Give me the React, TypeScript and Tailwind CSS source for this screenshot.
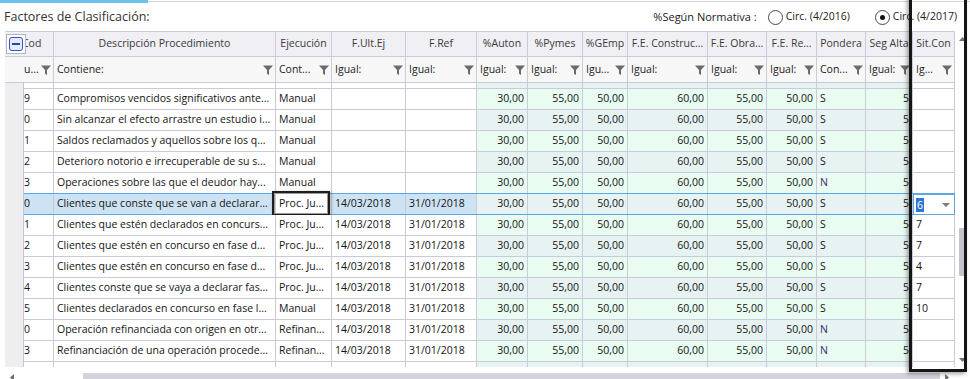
import { ReactNode } from "react";

const GRID = "border-[#cacadb]";

type Row = {
  cod: string;
  desc: string;
  ejec: string;
  fult: string;
  fref: string;
  pond: string;
  sit: string;
  selected?: boolean;
};

const rows: Row[] = [
  { cod: "8", desc: "", ejec: "", fult: "", fref: "", pond: "", sit: "" },
  { cod: "9", desc: "Compromisos vencidos significativos ante...", ejec: "Manual", fult: "", fref: "", pond: "S", sit: "" },
  { cod: "0", desc: "Sin alcanzar el efecto arrastre un estudio i...", ejec: "Manual", fult: "", fref: "", pond: "S", sit: "" },
  { cod: "1", desc: "Saldos reclamados y aquellos sobre los q...", ejec: "Manual", fult: "", fref: "", pond: "S", sit: "" },
  { cod: "2", desc: "Deterioro notorio e irrecuperable de su s...", ejec: "Manual", fult: "", fref: "", pond: "S", sit: "" },
  { cod: "3", desc: "Operaciones sobre las que el deudor hay...", ejec: "Manual", fult: "", fref: "", pond: "N", sit: "" },
  { cod: "0", desc: "Clientes que conste que se van a declarar...", ejec: "Proc. Ju...", fult: "14/03/2018", fref: "31/01/2018", pond: "S", sit: "6", selected: true },
  { cod: "1", desc: "Clientes que estén declarados en concurs...", ejec: "Proc. Ju...", fult: "14/03/2018", fref: "31/01/2018", pond: "S", sit: "7" },
  { cod: "2", desc: "Clientes que estén en concurso en fase d...", ejec: "Proc. Ju...", fult: "14/03/2018", fref: "31/01/2018", pond: "S", sit: "7" },
  { cod: "3", desc: "Clientes que estén en concurso en fase d...", ejec: "Proc. Ju...", fult: "14/03/2018", fref: "31/01/2018", pond: "S", sit: "4" },
  { cod: "4", desc: "Clientes conste que se vaya a declarar fas...", ejec: "Proc. Ju...", fult: "14/03/2018", fref: "31/01/2018", pond: "S", sit: "7" },
  { cod: "5", desc: "Clientes declarados en concurso en  fase l...", ejec: "Manual", fult: "14/03/2018", fref: "31/01/2018", pond: "S", sit: "10" },
  { cod: "0", desc: "Operación refinanciada con origen en otr...", ejec: "Refinan...", fult: "14/03/2018", fref: "31/01/2018", pond: "N", sit: "" },
  { cod: "3", desc: "Refinanciación de una operación procede...", ejec: "Refinan...", fult: "14/03/2018", fref: "31/01/2018", pond: "N", sit: "" },
  { cod: "4", desc: "", ejec: "", fult: "", fref: "", pond: "", sit: "" },
];

const headers = [
  { w: "w-[222px]", title: "Descripción Procedimiento", filter: "Contiene:" },
  { w: "w-[56px]", title: "Ejecución", filter: "Cont..." },
  { w: "w-[74px]", title: "F.Ult.Ej", filter: "Igual:" },
  { w: "w-[71px]", title: "F.Ref", filter: "Igual:" },
  { w: "w-[51px]", title: "%Auton", filter: "Igual:" },
  { w: "w-[55px]", title: "%Pymes", filter: "Igual:" },
  { w: "w-[45px]", title: "%GEmp", filter: "Igu..." },
  { w: "w-[80px]", title: "F.E. Construc...", filter: "Igual:" },
  { w: "w-[59px]", title: "F.E. Obra...", filter: "Igual:" },
  { w: "w-[50px]", title: "F.E. Re...", filter: "Igual:" },
  { w: "w-[49px]", title: "Pondera", filter: "Con..." },
  { w: "w-[47px]", title: "Seg Alta", filter: "Igual:" },
  { w: "w-[42px]", title: "Sit.Con", filter: "Ig..." },
];

const Funnel = () => (
  <svg width="10" height="10" viewBox="0 0 10 10" className="shrink-0">
    <path d="M0 0.5 H10 L6 5 V10 L4 8.8 V5 Z" fill="#6b6b6b" />
  </svg>
);

const Cell = ({ w, bg, right, children, className = "" }: { w: string; bg: string; right?: boolean; children?: ReactNode; className?: string }) => (
  <div
    className={`${w} ${bg} h-full shrink-0 border-r border-b ${GRID} flex items-center overflow-hidden whitespace-nowrap ${right ? "justify-end pr-[3px]" : "pl-[3px]"} ${className}`}
  >
    {children}
  </div>
);

const Radio = ({ checked, label }: { checked?: boolean; label: string }) => (
  <div className="flex items-center gap-[3px]">
    <div className="w-[15px] h-[15px] rounded-full border border-[#4a4a4a] bg-white flex items-center justify-center">
      {checked && <div className="w-[5px] h-[5px] rounded-full bg-[#111]" />}
    </div>
    <span>{label}</span>
  </div>
);

export default function App() {
  return (
    <div className="relative w-[970px] h-[379px] bg-white overflow-hidden font-['Open_Sans',sans-serif] text-[10.5px] text-[#141414]">
      {/* top tab strip */}
      <div className="flex h-[3px]">
        <div className="w-[148px] bg-[#69c2ee]" />
        <div className="flex-1 mt-[1px] h-px bg-[#d4d4d4]" />
      </div>

      {/* title + normativa */}
      <div className="flex items-center h-[28px] pl-[4px] pr-[13px]">
        <span className="text-[12.5px] text-[#333]">Factores de Clasificación:</span>
        <div className="ml-auto flex items-center text-[#222]">
          <span className="text-[11px] mr-[11px]">%Según Normativa :</span>
          <Radio label="Circ. (4/2016)" />
          <div className="w-[25px]" />
          <Radio checked label="Circ. (4/2017)" />
        </div>
      </div>

      <div className="flex">
        {/* grid */}
        <div className={`ml-[5px] w-[950px] border-t ${GRID}`}>
          {/* header */}
          <div className="flex h-[25px] text-[#3a3a3a]">
            <div className={`w-[49px] h-full shrink-0 bg-[#efeff4] border-r border-b ${GRID} flex items-center overflow-hidden`}>
              <div className="relative z-10 ml-[1px] w-[20px] h-[20px] bg-white border border-[#b4b4c4] flex items-center justify-center">
                <div className="w-[14px] h-[14px] rounded-[3px] border border-[#3550c8] bg-[#e6ecfb] flex items-center justify-center">
                  <div className="w-[8px] h-[2px] bg-[#2a44b8]" />
                </div>
              </div>
              <span className="-ml-[4px]">Cod</span>
            </div>
            {headers.map((h) => (
              <div
                key={h.title}
                className={`${h.w} h-full shrink-0 bg-[#efeff4] border-r border-b ${GRID} flex items-center justify-center overflow-hidden whitespace-nowrap`}
              >
                {h.title}
              </div>
            ))}
          </div>

          {/* filter row */}
          <div className="flex h-[26px] text-[#222]">
            <div className={`w-[49px] h-full shrink-0 bg-[#f7f7f7] border-r border-b ${GRID} flex items-center pr-[2px]`}>
              <span className="ml-[19px] overflow-hidden">u...</span>
              <span className="ml-auto">
                <Funnel />
              </span>
            </div>
            {headers.map((h) => (
              <div
                key={h.title}
                className={`${h.w} h-full shrink-0 bg-[#f7f7f7] border-r border-b ${GRID} flex items-center pl-[3px] pr-[2px] overflow-hidden whitespace-nowrap`}
              >
                <span className="overflow-hidden">{h.filter}</span>
                <span className="ml-auto pl-[2px]">
                  <Funnel />
                </span>
              </div>
            ))}
          </div>

          {/* body */}
          <div className="h-[284px] overflow-hidden flex">
            <div className="w-[19px] shrink-0 bg-[#eeeef1] border-r border-[#c4c4d4]" />
            <div className="-mt-[15px]">
              {rows.map((r, i) => {
                const tint = i % 2 === 1 ? "bg-[#e9fcf2]" : "bg-[#e7f3f3]";
                const txt = r.selected ? "bg-[#cde3f4]" : "bg-white";
                const num = r.desc ? true : false;
                return (
                  <div key={i} className="relative flex h-[21px]">
                    <Cell w="w-[30px]" bg={txt}>
                      <span className="-ml-[3px]">{r.cod}</span>
                    </Cell>
                    <Cell w="w-[222px]" bg={txt}>{r.desc}</Cell>
                    <Cell w="w-[56px]" bg={r.selected ? "bg-white" : txt}>{r.ejec}</Cell>
                    <Cell w="w-[74px]" bg={txt}>{r.fult}</Cell>
                    <Cell w="w-[71px]" bg={txt}>{r.fref}</Cell>
                    <Cell w="w-[51px]" bg={tint} right>{num && "30,00"}</Cell>
                    <Cell w="w-[55px]" bg={tint} right>{num && "55,00"}</Cell>
                    <Cell w="w-[45px]" bg={tint} right>{num && "50,00"}</Cell>
                    <Cell w="w-[80px]" bg={tint} right>{num && "60,00"}</Cell>
                    <Cell w="w-[59px]" bg={tint} right>{num && "55,00"}</Cell>
                    <Cell w="w-[50px]" bg={tint} right>{num && "50,00"}</Cell>
                    <Cell w="w-[49px]" bg={tint} className={r.pond === "N" ? "text-[#3b1f6e]" : ""}>
                      {r.pond}
                    </Cell>
                    <Cell w="w-[47px]" bg={tint} right>{num && "5"}</Cell>
                    {r.selected ? (
                      <div className="w-[42px] h-full shrink-0 bg-white border border-[#5ba8e2] flex items-center pl-[2px] pr-[4px]">
                        <span className="bg-[#2f74d6] text-white px-px leading-[14px]">{r.sit}</span>
                        <svg width="8" height="4" viewBox="0 0 8 4" className="ml-auto">
                          <path d="M0 0 H8 L4 4 Z" fill="#7a7a7a" />
                        </svg>
                      </div>
                    ) : (
                      <Cell w="w-[42px]" bg="bg-white">{r.sit}</Cell>
                    )}

                    {r.selected && (
                      <>
                        <div className="absolute left-0 right-0 -top-px h-px bg-[#5aa9e6]" />
                        <div className="absolute left-0 right-0 bottom-0 h-px bg-[#5aa9e6]" />
                        <div className="absolute left-[248px] -top-[3px] w-[58px] h-[25px] border-2 border-[#1d1d1d] shadow-[inset_0_0_0_1px_#9a9a9a,1px_1px_3px_rgba(0,0,0,0.35)]" />
                      </>
                    )}
                  </div>
                );
              })}
            </div>
          </div>
          <div className="h-[5px]" />
        </div>

        {/* vertical scrollbar */}
        <div className="w-[15px] h-[341px] bg-white flex flex-col items-center pt-[6px] pb-[10px]">
          <svg width="7" height="4" viewBox="0 0 7 4">
            <path d="M0 4 L3.5 0 L7 4 Z" fill="#707070" />
          </svg>
          <div className="mt-[187px] w-[7px] h-[48px] bg-[#c3c3cb] rounded-[1px]" />
          <svg width="7" height="4" viewBox="0 0 7 4" className="mt-auto">
            <path d="M0 0 L7 0 L3.5 4 Z" fill="#707070" />
          </svg>
        </div>
      </div>

      {/* horizontal scrollbar */}
      <div className="flex items-end h-[7px]">
        <svg width="4" height="7" viewBox="0 0 4 7" className="ml-[10px] mb-[-2px]">
          <path d="M4 0 L0 3.5 L4 7 Z" fill="#707070" />
        </svg>
        <div className="ml-[69px] w-[857px] h-[6px] bg-[#d3d3dc]" />
        <svg width="4" height="7" viewBox="0 0 4 7" className="ml-[5px] mb-[-2px]">
          <path d="M0 0 L4 3.5 L0 7 Z" fill="#707070" />
        </svg>
      </div>

      {/* highlight frame */}
      <div className="absolute left-[909px] -top-[4px] w-[58px] h-[376px] border-[3px] border-[#151515] shadow-[-2px_2px_4px_rgba(0,0,0,0.35)] pointer-events-none" />
    </div>
  );
}
